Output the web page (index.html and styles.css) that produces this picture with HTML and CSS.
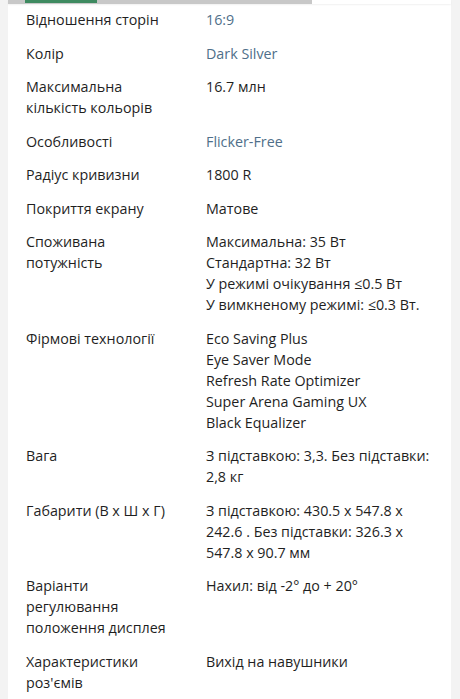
FILE: index.html
```html
<!DOCTYPE html>
<html lang="uk">
<head>
<meta charset="utf-8">
<link rel="stylesheet" href="styles.css">
</head>
<body>
<div class="card">
  <div class="scrollbar"><div class="track"><div class="thumb"></div></div></div>
  <dl class="specs">
    <div class="row"><dt>Відношення сторін</dt><dd class="link">16:9</dd></div>
    <div class="row"><dt>Колір</dt><dd class="link">Dark Silver</dd></div>
    <div class="row"><dt>Максимальна<br>кількість кольорів</dt><dd>16.7 млн</dd></div>
    <div class="row"><dt>Особливості</dt><dd class="link">Flicker-Free</dd></div>
    <div class="row"><dt>Радіус кривизни</dt><dd>1800 R</dd></div>
    <div class="row"><dt>Покриття екрану</dt><dd>Матове</dd></div>
    <div class="row"><dt>Споживана<br>потужність</dt><dd>Максимальна: 35 Вт<br>Стандартна: 32 Вт<br>У режимі очікування ≤0.5 Вт<br>У вимкненому режимі: ≤0.3 Вт.</dd></div>
    <div class="row"><dt>Фірмові технології</dt><dd>Eco Saving Plus<br>Eye Saver Mode<br>Refresh Rate Optimizer<br>Super Arena Gaming UX<br>Black Equalizer</dd></div>
    <div class="row"><dt>Вага</dt><dd>З підставкою: 3,3. Без підставки:<br>2,8 кг</dd></div>
    <div class="row"><dt>Габарити (В х Ш х Г)</dt><dd>З підставкою: 430.5 x 547.8 x<br>242.6 . Без підставки: 326.3 x<br>547.8 x 90.7 мм</dd></div>
    <div class="row"><dt>Варіанти<br>регулювання<br>положення дисплея</dt><dd>Нахил: від -2° до + 20°</dd></div>
    <div class="row"><dt>Характеристики<br>роз'ємів</dt><dd>Вихід на навушники</dd></div>
  </dl>
</div>
</body>
</html>
```

FILE: styles.css
```css
html, body {
  margin: 0;
  padding: 0;
  background: #f3f3f3;
}
body {
  font-family: "Open Sans", "Noto Sans", sans-serif;
  color: #1f1f1f;
  height: 699px;
  overflow: hidden;
}
.card {
  background: #fff;
  margin: 0 9px 0 8px;
  min-height: 699px;
}
.scrollbar {
  height: 4px;
  box-shadow: 0 1px 2px rgba(0, 0, 0, 0.06);
}
.track {
  width: 304px;
  height: 4px;
  background: #c8c8c8;
  padding-left: 17px;
  box-sizing: border-box;
}
.thumb {
  width: 72px;
  height: 3px;
  background: #3e8a60;
}
.specs {
  margin: 0;
  padding: 5px 0 0 18px;
}
.row {
  display: flex;
  padding-bottom: 12.5px;
  font-size: 14.3px;
  line-height: 21px;
}
dt {
  width: 180px;
  flex: none;
}
dd {
  margin: 0;
}
.link {
  color: #4f6f8a;
}
```
